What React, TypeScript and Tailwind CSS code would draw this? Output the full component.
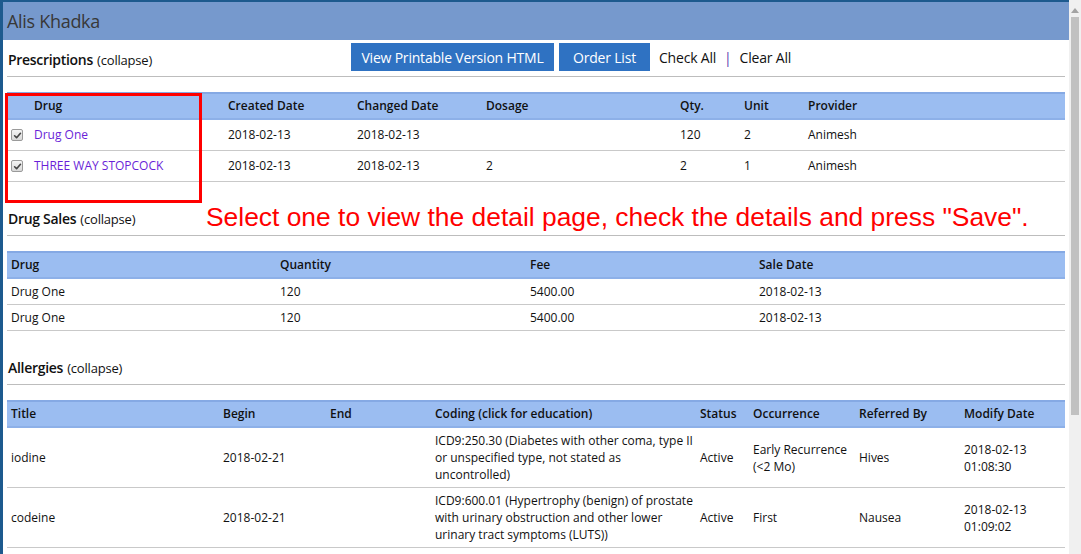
import React from "react";

const font = { fontFamily: '"Open Sans", "Noto Sans", sans-serif' };

function Check() {
  return (
    <span className="flex h-[12px] w-[12px] items-center justify-center rounded-[2px] border border-[#9a9a9a] bg-gradient-to-b from-[#f4f4f4] to-[#d8d8d8]">
      <svg width="9" height="9" viewBox="0 0 10 10" fill="none" stroke="#444" strokeWidth="1.8" strokeLinecap="round" strokeLinejoin="round">
        <path d="M1.8 5.3l2.2 2.2 4.3-5" />
      </svg>
    </span>
  );
}

function SectionTitle({ title, children, first }: { title: string; children?: React.ReactNode; first?: boolean }) {
  return (
    <div className={`grid h-[36px] grid-cols-[344px_1fr] items-center border-b border-[#bdbdbd] ${first ? "mt-px" : "mt-[18px]"}`}>
      <div className="pl-px text-[#111]">
        <span className="text-[14px] font-semibold tracking-[-0.3px]">{title}</span>{" "}
        <span className="text-[13px] tracking-[-0.2px]">(collapse)</span>
      </div>
      {children}
    </div>
  );
}

const headRow = "grid h-[28px] items-center border-y-2 border-t-[#85a9e4] border-b-[#8db0e8] bg-[#9bbdf1] text-[12px] font-semibold text-[#111]";
const bodyRow = "grid items-center border-b border-[#c9c9c9] text-[12px] text-[#111]";

const rxCols = "grid-cols-[23px_194px_129px_129px_194px_64px_64px_1fr]";
const salesCols = "grid-cols-[269px_250px_229px_1fr]";
const algCols = "grid-cols-[212px_107px_105px_265px_53px_106px_105px_1fr]";

const prescriptions = [
  { drug: "Drug One", created: "2018-02-13", changed: "2018-02-13", dosage: "", qty: "120", unit: "2", provider: "Animesh" },
  { drug: "THREE WAY STOPCOCK", created: "2018-02-13", changed: "2018-02-13", dosage: "2", qty: "2", unit: "1", provider: "Animesh" },
];

const sales = [
  { drug: "Drug One", qty: "120", fee: "5400.00", date: "2018-02-13" },
  { drug: "Drug One", qty: "120", fee: "5400.00", date: "2018-02-13" },
];

const allergies = [
  {
    title: "iodine",
    begin: "2018-02-21",
    coding: ["ICD9:250.30 (Diabetes with other coma, type II", "or unspecified type, not stated as", "uncontrolled)"],
    status: "Active",
    occurrence: ["Early Recurrence", "(<2 Mo)"],
    referred: "Hives",
    modified: ["2018-02-13", "01:08:30"],
  },
  {
    title: "codeine",
    begin: "2018-02-21",
    coding: ["ICD9:600.01 (Hypertrophy (benign) of prostate", "with urinary obstruction and other lower", "urinary tract symptoms (LUTS))"],
    status: "Active",
    occurrence: ["First"],
    referred: "Nausea",
    modified: ["2018-02-13", "01:09:02"],
  },
];

function Lines({ lines }: { lines: string[] }) {
  return (
    <div className="whitespace-nowrap">
      {lines.map((l) => (
        <div key={l}>{l}</div>
      ))}
    </div>
  );
}

export default function App() {
  return (
    <div className="flex h-[554px] w-[1081px] overflow-hidden bg-white" style={font}>
      <main className="relative flex-1 border-l-[3px] border-t-2 border-[#1d5a8e]">
        {/* patient header */}
        <div className="flex h-[38px] items-center bg-[#7699cd] pl-[4px] text-[18px] tracking-[-0.3px] text-[#383838]">Alis Khadka</div>

        <div className="px-[4px]">
          <SectionTitle title="Prescriptions" first>
            <div className="flex items-center pb-[3px] text-[14px] tracking-[-0.2px]">
              <button type="button" className="h-[28px] w-[203px] bg-[#2f72c2] text-white">View Printable Version HTML</button>
              <button type="button" className="ml-[5px] h-[28px] w-[91px] bg-[#2f72c2] text-white">Order List</button>
              <span className="ml-[9px] text-[#111]">Check All</span>
              <span className="mx-[8px] text-[#5a3db0]">|</span>
              <span className="text-[#111]">Clear All</span>
            </div>
          </SectionTitle>

          <div className="mt-[15px]">
            <div className={`${headRow} ${rxCols}`}>
              <div />
              <div className="px-[4px]">Drug</div>
              <div className="px-[4px]">Created Date</div>
              <div className="px-[4px]">Changed Date</div>
              <div className="px-[4px]">Dosage</div>
              <div className="px-[4px]">Qty.</div>
              <div className="px-[4px]">Unit</div>
              <div className="px-[4px]">Provider</div>
            </div>
            {prescriptions.map((p) => (
              <div key={p.drug} className={`${bodyRow} ${rxCols} h-[31px]`}>
                <div className="pl-[4px]"><Check /></div>
                <div className="px-[4px] text-[#6a1fd8]">{p.drug}</div>
                <div className="px-[4px]">{p.created}</div>
                <div className="px-[4px]">{p.changed}</div>
                <div className="px-[4px]">{p.dosage}</div>
                <div className="px-[4px]">{p.qty}</div>
                <div className="px-[4px]">{p.unit}</div>
                <div className="px-[4px]">{p.provider}</div>
              </div>
            ))}
          </div>

          <SectionTitle title="Drug Sales" />
          <div className="mt-[15px]">
            <div className={`${headRow} ${salesCols}`}>
              <div className="px-[4px]">Drug</div>
              <div className="px-[4px]">Quantity</div>
              <div className="px-[4px]">Fee</div>
              <div className="px-[4px]">Sale Date</div>
            </div>
            {sales.map((s, i) => (
              <div key={i} className={`${bodyRow} ${salesCols} h-[26px]`}>
                <div className="px-[4px]">{s.drug}</div>
                <div className="px-[4px]">{s.qty}</div>
                <div className="px-[4px]">{s.fee}</div>
                <div className="px-[4px]">{s.date}</div>
              </div>
            ))}
          </div>

          <SectionTitle title="Allergies" />
          <div className="mt-[15px]">
            <div className={`${headRow} ${algCols}`}>
              <div className="px-[4px]">Title</div>
              <div className="px-[4px]">Begin</div>
              <div className="px-[4px]">End</div>
              <div className="px-[4px]">Coding (click for education)</div>
              <div className="px-[4px]">Status</div>
              <div className="px-[4px]">Occurrence</div>
              <div className="px-[4px]">Referred By</div>
              <div className="px-[4px]">Modify Date</div>
            </div>
            {allergies.map((a) => (
              <div key={a.title} className={`${bodyRow} ${algCols} py-[4px] leading-[17px]`}>
                <div className="px-[4px]">{a.title}</div>
                <div className="px-[4px]">{a.begin}</div>
                <div className="px-[4px]" />
                <div className="px-[4px]"><Lines lines={a.coding} /></div>
                <div className="px-[4px]">{a.status}</div>
                <div className="px-[4px]"><Lines lines={a.occurrence} /></div>
                <div className="px-[4px]">{a.referred}</div>
                <div className="px-[4px]"><Lines lines={a.modified} /></div>
              </div>
            ))}
          </div>
        </div>

        {/* annotation overlay */}
        <div className="pointer-events-none absolute left-[2px] top-[91px] h-[110px] w-[197px] border-[3px] border-[#ff0000]" />
        <div
          className="pointer-events-none absolute left-[203px] top-[200px] whitespace-nowrap text-[26.4px] leading-[30px] text-[#ff0000]"
          style={{ fontFamily: '"Liberation Sans", Arial, sans-serif' }}
        >
          Select one to view the detail page, check the details and press "Save".
        </div>
      </main>

      {/* scrollbar */}
      <div className="flex w-[12px] flex-col items-center bg-[#f0f0f0]">
        <svg width="8" height="5" viewBox="0 0 8 5" className="mt-[8px]">
          <path d="M0 5L4 0l4 5z" fill="#a3a3a3" />
        </svg>
        <div className="mt-[4px] h-[398px] w-[8px] bg-[#c1c1c1]" />
      </div>
    </div>
  );
}
